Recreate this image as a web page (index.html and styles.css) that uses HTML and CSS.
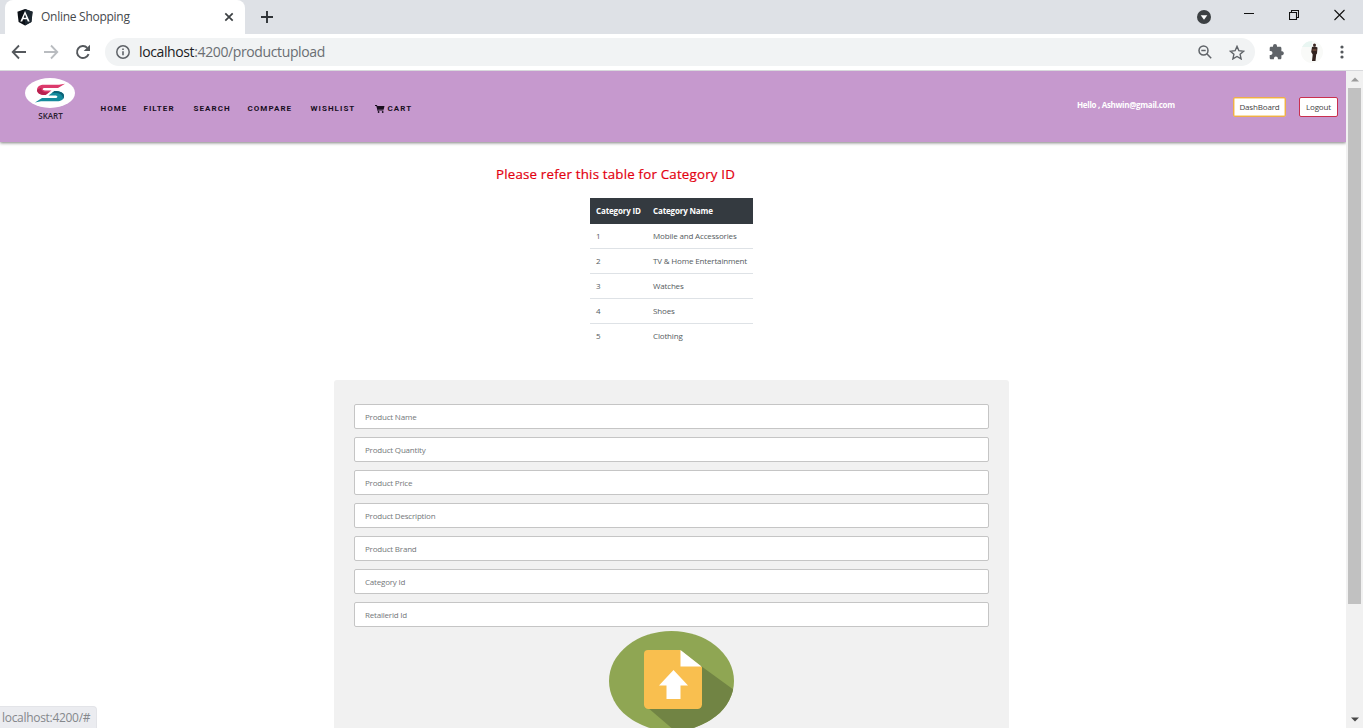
FILE: index.html
```html
<!DOCTYPE html>
<html lang="en">
<head>
<meta charset="utf-8">
<title>Online Shopping</title>
<link rel="stylesheet" href="styles.css">
</head>
<body>
<div class="browser">
  <div class="tabstrip">
    <div class="tab">
      <svg class="favicon" width="16" height="17" viewBox="0 0 16 17"><path fill="#0b1016" d="M8 0l7.600 2.700-1.200 10.200L8 16.600 1.600 12.900.400 2.700z"/><path fill="#1c2730" d="M8 0l7.600 2.700-1.200 10.200L8 16.600z"/><path fill="#fff" d="M8 2L3.300 12.600h1.900l.9-2.400h3.800l.9 2.400h1.900zM8 5.300l1.300 3.400H6.700z" fill-rule="evenodd"/></svg>
      <span class="tab-title">Online Shopping</span>
      <svg class="tab-close" width="10" height="10" viewBox="0 0 10 10"><path d="M1.300 1.300l7.400 7.400M8.700 1.300L1.300 8.700" stroke="#3c4043" stroke-width="1.700"/></svg>
    </div>
    <svg class="new-tab" width="14" height="14" viewBox="0 0 14 14"><path d="M7 1v12M1 7h12" stroke="#2f3337" stroke-width="1.900"/></svg>
    <div class="window-buttons">
      <svg width="14" height="14" viewBox="0 0 14 14"><circle cx="7" cy="7" r="7" fill="#3c4043"/><path d="M3.700 5.200h6.600L7 9.800z" fill="#fff"/></svg>
      <svg width="10" height="14" viewBox="0 0 10 14"><path d="M0 4.500h10" stroke="#111"/></svg>
      <svg width="10" height="14" viewBox="0 0 10 14"><path d="M.5 3.500h7v7h-7zM2.500 3.500v-2h7v7h-2" fill="none" stroke="#111" stroke-width="1.100"/></svg>
      <svg width="11" height="14" viewBox="0 0 11 14"><path d="M.5 1l10 10M10.500 1L.5 11" stroke="#111" stroke-width="1.100"/></svg>
    </div>
  </div>
  <div class="toolbar">
    <div class="history">
      <svg width="16" height="16" viewBox="0 0 16 16"><path d="M15 8H2M8 1.500L1.700 8 8 14.500" fill="none" stroke="#54585c" stroke-width="1.800"/></svg>
      <svg width="16" height="16" viewBox="0 0 16 16"><path d="M1 8h13M8 1.500L14.300 8 8 14.500" fill="none" stroke="#b9bcc0" stroke-width="1.800"/></svg>
      <svg width="16" height="16" viewBox="0 0 16 16"><path d="M13.600 10.200A6 6 0 1 1 12.300 3.800" fill="none" stroke="#54585c" stroke-width="1.900"/><path d="M15 .8v6.300H8.700z" fill="#54585c"/></svg>
    </div>
    <div class="omnibox">
      <svg width="14" height="14" viewBox="0 0 14 14"><circle cx="7" cy="7" r="6.200" fill="none" stroke="#5f6368" stroke-width="1.500"/><path d="M7 6.200v4M7 3.400V5" stroke="#5f6368" stroke-width="1.600"/></svg>
      <span class="url"><b>localhost</b>:4200/productupload</span>
      <svg class="zoom-icon" width="14" height="14" viewBox="0 0 14 14"><circle cx="5.500" cy="5.500" r="4.500" fill="none" stroke="#5f6368" stroke-width="1.500"/><path d="M8.800 8.800l4.400 4.400M3.300 5.500h4.400" stroke="#5f6368" stroke-width="1.500"/></svg>
      <svg class="star-icon" width="16" height="15" viewBox="0 0 16 15"><path d="M8 1.400l1.900 4.300 4.700.5-3.500 3.100 1 4.600L8 11.500l-4.100 2.400 1-4.600L1.400 6.200l4.700-.5z" fill="none" stroke="#5f6368" stroke-width="1.400"/></svg>
    </div>
    <svg class="puzzle" width="16" height="16" viewBox="0 0 16 16"><path fill="#5f6368" d="M13.300 7.300h-.9V4.200c0-.8-.6-1.400-1.400-1.400H8V2a2 2 0 0 0-4 0v.8H2C1.200 2.800.7 3.400.7 4.200V7h.8a2 2 0 0 1 0 4H.7v3c0 .8.600 1.300 1.300 1.300h2.900v-.8a2 2 0 0 1 4 0v.8H11c.8 0 1.400-.5 1.400-1.300v-2.800h.9a2 2 0 0 0 0-3.900z"/></svg>
    <svg class="avatar" width="24" height="24" viewBox="0 0 24 24"><circle cx="12" cy="12" r="11" fill="#f9faf8"/><path d="M2 7a11 11 0 0 1 10-6v6z" fill="#e9f6f2"/><circle cx="14.500" cy="5" r="1.500" fill="#3b2722"/><path d="M12 7l2.500-.8L17.500 7.500l-.5 6-.8 1-.7 6.500h-3.500l.7-6.500-1.500-2.500z" fill="#32231f"/><path d="M12.500 10h4" stroke="#90604b"/></svg>
    <svg class="kebab" width="4" height="14" viewBox="0 0 4 14"><g fill="#54585c"><circle cx="2" cy="2" r="1.600"/><circle cx="2" cy="7" r="1.600"/><circle cx="2" cy="12" r="1.600"/></g></svg>
  </div>
  <div class="viewport">
    <div class="page">
      <header class="navbar">
        <div class="brand">
          <svg width="50" height="30" viewBox="0 0 50 30"><ellipse cx="25" cy="15" rx="25" ry="15" fill="#fff"/><path d="M40 5.800L33 10H20c-3 0-3 2.400 0 2.400h6.500L20.500 17c-5 0-8.500-2-8.500-5 0-3.500 3-5.200 7-5.200h15z" fill="#dc3a6c"/><path d="M12 12c0 3 3 5 8.500 5l4-3c-5 1-9-1-8-4.500z" fill="#b9214f"/><path d="M10 24.500l7-4.500h13c3.200 0 3.200-2.600 0-2.600h-6.500L29.500 13c5.500 0 9.500 1.500 9.500 5 0 3.700-3 5.300-7 5.300H16z" fill="#158a9c"/><path d="M29.500 13c5.500 0 9.500 1.500 9.500 5 0 1-.3 2-.9 2.800C38 16 34 14.500 27 15z" fill="#0d6176"/></svg>
          <span>SKART</span>
        </div>
        <nav class="menu">
          <a>HOME</a><a>FILTER</a><a>SEARCH</a><a>COMPARE</a><a>WISHLIST</a>
          <a class="cart"><svg width="10" height="8" viewBox="0 0 10 8"><path d="M0 0h2l.3 1H9.500L8.600 4.700H3.200l.2.800h5V6H2.600L1.300.9H0z" fill="#190f1e"/><circle cx="3.600" cy="7" r=".9" fill="#190f1e"/><circle cx="7.700" cy="7" r=".9" fill="#190f1e"/></svg>CART</a>
        </nav>
        <span class="greeting">Hello , Ashwin@gmail.com</span>
        <button class="btn dashboard">DashBoard</button>
        <button class="btn logout">Logout</button>
      </header>
      <main class="content">
        <h2 class="hint">Please refer this table for Category ID</h2>
        <table class="categories">
          <thead><tr><th>Category ID</th><th>Category Name</th></tr></thead>
          <tbody>
            <tr><td>1</td><td>Mobile and Accessories</td></tr>
            <tr><td>2</td><td>TV &amp; Home Entertainment</td></tr>
            <tr><td>3</td><td>Watches</td></tr>
            <tr><td>4</td><td>Shoes</td></tr>
            <tr><td>5</td><td>Clothing</td></tr>
          </tbody>
        </table>
        <form class="upload">
          <input placeholder="Product Name">
          <input placeholder="Product Quantity">
          <input placeholder="Product Price">
          <input placeholder="Product Description">
          <input placeholder="Product Brand">
          <input placeholder="Category Id">
          <input placeholder="Retailerid Id">
          <svg class="upload-icon" width="125" height="100" viewBox="0 0 125 100">
            <defs><clipPath id="disc"><ellipse cx="62.500" cy="50" rx="62.500" ry="50"/></clipPath></defs>
            <g clip-path="url(#disc)"><path fill="#8fa653" d="M0 0h125v100H0z"/><path fill="#718444" d="M92 35l33 24v41H66L38 76z"/></g>
            <path fill="#f9bf4f" d="M39 19h32l22 17v37.500a4.500 4.500 0 0 1-4.500 4.500H39.500a4.500 4.500 0 0 1-4.500-4.500V23a4 4 0 0 1 4-4z"/>
            <path fill="#fff" d="M71.500 19L92.500 35.500h-21zM64.500 39L79 54.500h-7.500V68h-14V54.500H50z"/>
          </svg>
        </form>
      </main>
    </div>
    <div class="scrollbar">
      <svg width="8" height="5" viewBox="0 0 8 5"><path d="M0 4.500L4 .5l4 4z" fill="#9b9b9b"/></svg>
      <div class="thumb"></div>
      <svg width="8" height="5" viewBox="0 0 8 5"><path d="M0 .5h8l-4 4z" fill="#484848"/></svg>
    </div>
  </div>
  <div class="status">localhost:4200/#</div>
</div>
</body>
</html>
```
FILE: styles.css
```css
* { box-sizing: border-box; }
body { margin: 0; font-family: "Open Sans", "Noto Sans", sans-serif; background: #fff; overflow: hidden; }
svg { display: block; flex: none; }
.browser { position: relative; width: 1363px; height: 728px; overflow: hidden; display: flex; flex-direction: column; }

.tabstrip { flex: none; height: 34px; background: #dee1e6; display: flex; align-items: center; padding-left: 5px; }
.tab { width: 240px; height: 34px; background: #fff; border-radius: 8px 8px 0 0; display: flex; align-items: center; padding: 0 11px 0 12px; }
.tab-title { margin-left: 8px; font-size: 12px; line-height: 16px; padding-bottom: 1px; letter-spacing: -.27px; color: #45494d; flex: 1; white-space: nowrap; }
.new-tab { margin-left: 15px; }
.window-buttons { margin-left: auto; display: flex; align-items: center; padding: 0 18px 0 0; gap: 35px; }
.window-buttons svg { margin-bottom: 3px; }
.window-buttons svg:first-child { margin: 0 -2px 0 0; }

.toolbar { flex: none; height: 37px; border-bottom: 1px solid #d8d9dc; display: flex; align-items: center; padding: 0 19px 0 11px; }
.history { display: flex; gap: 16px; }
.omnibox { margin-left: 14px; width: 1150px; height: 28px; border-radius: 14px; background: #f1f3f4; display: flex; align-items: center; padding: 0 10px 0 11px; }
.url { margin-left: 9px; font-size: 14px; line-height: 18px; padding-bottom: 1px; letter-spacing: -.38px; color: #6a6e73; flex: 1; white-space: nowrap; }
.url b { font-weight: 400; color: #202124; }
.star-icon { margin-left: 17px; }
.puzzle { margin-left: 14px; }
.avatar { margin-left: 15px; }
.kebab { margin-left: auto; }

.viewport { flex: 1; min-height: 0; display: flex; }
.page { flex: 1; min-width: 0; overflow: hidden; }
.navbar { position: relative; height: 71px; background: #c699ce; box-shadow: 0 1px 3px rgba(0, 0, 0, .5); display: flex; align-items: flex-start; padding: 0 8px 0 25px; white-space: nowrap; }
.brand { width: 75px; padding-top: 7px; }
.brand span { display: block; width: 51px; margin-top: 2px; text-align: center; font-size: 8px; line-height: 12px; font-weight: 600; letter-spacing: 0; color: #2b2030; }
.menu { padding-top: 32px; display: grid; grid-template-columns: 43px 50px 54px 63px 64px auto; font: 700 8px/11px Roboto, sans-serif; letter-spacing: 1.050px; color: #190f1e; }
.menu a { padding-left: .5px; }
.cart { display: flex; align-items: center; gap: 3px; }
.greeting { margin: 28px 0 0 auto; width: 156px; font-size: 8px; line-height: 12px; font-weight: 700; letter-spacing: -.3px; color: #fff; }
.btn { margin: 26px 0 0; height: 20px; padding: 0; border-radius: 2px; background: #fff; font: 8px/12px "Open Sans", sans-serif; letter-spacing: -.15px; color: #444; }
.dashboard { width: 53px; border: 1px solid #efae47; box-shadow: inset 0 0 0 .5px #f3bd50; }
.logout { width: 39px; margin-left: 13px; border: 1px solid #c9304f; }

.content { font-size: 8px; }
.hint { margin: 22px 0 0 496px; font-size: 13.300px; line-height: 20px; font-weight: 500; letter-spacing: .2px; -webkit-text-stroke: .2px #e3000f; color: #e3000f; white-space: nowrap; }
.categories { margin: 14px 0 0 590px; width: 163px; table-layout: fixed; border-collapse: separate; border-spacing: 0; line-height: 12px; color: #555b60; white-space: nowrap; }
.categories th, .categories td { height: 25px; padding: 0 6px; text-align: left; vertical-align: middle; }
.categories th { height: 26px; background: #343a40; color: #fff; font-weight: 700; letter-spacing: -.15px; }
.categories th:first-child { width: 57px; }
.categories td { border-bottom: 1px solid #dee2e6; letter-spacing: -.16px; }
.categories tr:last-child td { border-bottom-color: transparent; }

.upload { margin: 31px 0 0 334px; width: 675px; height: 360px; padding: 24px 20px 0; background: #f1f1f1; border-radius: 3px; display: flex; flex-direction: column; gap: 8px; }
.upload input { flex: none; height: 25px; width: 100%; padding: 0 10px; border: 1px solid #c5c5c5; border-radius: 2px; background: #fff; font: 8px/12px "Open Sans", sans-serif; letter-spacing: -.2px; }
.upload input::placeholder { color: #74777a; opacity: 1; }
.upload-icon { align-self: center; margin-top: -4px; }

.scrollbar { width: 17px; background: #f1f1f1; display: flex; flex-direction: column; align-items: center; padding: 6px 0; }
.thumb { width: 13px; height: 516px; margin: 6px 0 auto; background: #c1c1c1; }
.status { position: absolute; left: 0; bottom: 0; width: 97px; height: 22px; padding-left: 2px; background: #ebecf0; border: 1px solid #e3e4e8; border-width: 1px 1px 0 0; border-top-right-radius: 4px; font-size: 12px; line-height: 21px; letter-spacing: -.3px; color: #85888c; white-space: nowrap; }
```
